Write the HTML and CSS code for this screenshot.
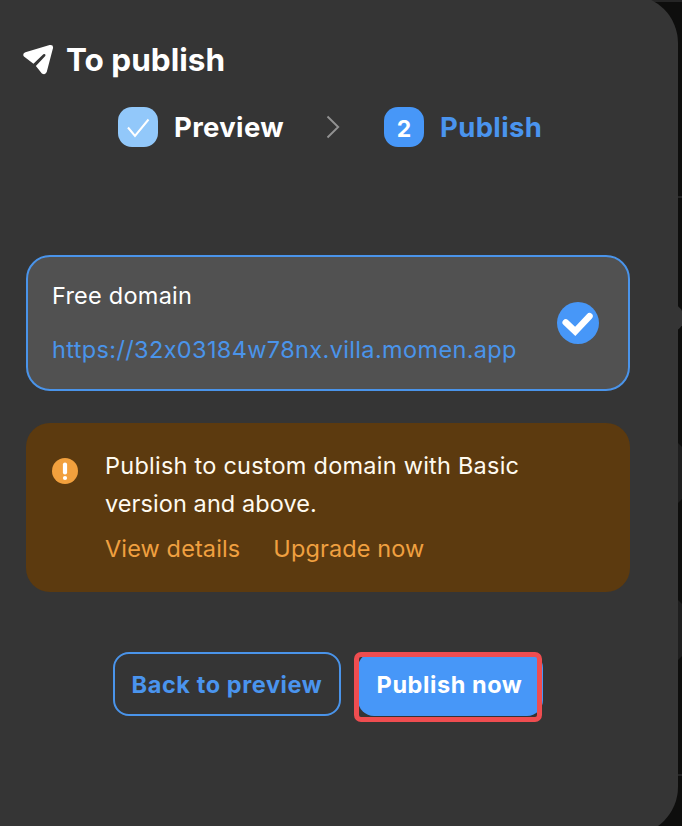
FILE: index.html
```html
<!DOCTYPE html>
<html lang="en">
<head>
<meta charset="utf-8">
<title>To publish</title>
<link rel="stylesheet" href="styles.css">
</head>
<body>
<div class="backdrop"><i class="line line-top"></i><i class="line line-mid"></i><i class="knob"></i><i class="block block-mid"></i><i class="block"></i><i class="line line-low"></i></div>
<main class="panel">
  <header class="header">
    <svg class="plane" viewBox="0 0 32 32"><path d="M3 8.500 28 1Q32 .400 31.500 4L25 29Q23.500 32.500 20 30.500L13.800 22.700 23.500 12.500Q24.300 9.800 21.500 10.500L11.300 20.300 1.500 13Q-.5 10 3 8.500Z" fill="#fff"/></svg>
    <h1 class="title">To publish</h1>
  </header>
  <nav class="steps">
    <span class="badge done"><svg viewBox="0 0 40 40"><path d="m10 20.500 7 8.500 13.500-16.500" fill="none" stroke="#fff" stroke-width="2"/></svg></span>
    <span class="step-name">Preview</span>
    <svg class="chevron" viewBox="0 0 14 24"><path d="m1.500 1.500 10.700 10.500-10.700 10.500" fill="none" stroke="#929292" stroke-width="1.900"/></svg>
    <span class="badge">2</span>
    <span class="step-name current">Publish</span>
  </nav>
  <section class="domain">
    <div class="domain-text">
      <div class="domain-label">Free domain</div>
      <a class="domain-link">https://32x03184w78nx.villa.momen.app</a>
    </div>
    <svg class="selected" viewBox="0 0 42 42"><circle cx="21" cy="21" r="21" fill="#4797f8"/><path d="m8.700 20.400 9.500 9 14.300-15.200" fill="none" stroke="#fff" stroke-width="6.500" stroke-linecap="round"/></svg>
  </section>
  <section class="notice">
    <svg class="alert" viewBox="0 0 26 26"><circle cx="13" cy="13" r="13" fill="#f2a03d"/><path d="M13 6.500v8" stroke="#fff" stroke-width="4.200" stroke-linecap="round"/><circle cx="13" cy="20" r="2.100" fill="#fff"/></svg>
    <div>
      <p class="message">Publish to custom domain with Basic<br><span class="message-end">version and above.</span></p>
      <div class="links"><a>View details</a><a>Upgrade now</a></div>
    </div>
  </section>
  <footer class="actions">
    <button class="button outline">Back to preview</button>
    <button class="button primary">Publish now<i class="highlight"></i></button>
  </footer>
</main>
</body>
</html>
```
FILE: styles.css
```css
* { box-sizing: border-box; }
body { margin: 0; width: 682px; height: 826px; overflow: hidden; position: relative; background: #0e0e0d; font-family: Inter, sans-serif; color: #fff; }
svg { display: block; flex: none; }
.backdrop { position: absolute; inset: 0; }
.line { position: absolute; right: 0; width: 40px; height: 2px; background: #252525; }
.line-top { top: 0; }
.line-mid { top: 196px; }
.line-low { top: 774px; }
.knob { position: absolute; left: 656px; top: 304px; width: 28px; height: 28px; border-radius: 50%; background: #353535; }
.block { position: absolute; right: 0; top: 600px; width: 4px; height: 60px; background: #1e1e1e; clip-path: polygon(0 0, 100% 4px, 100% 56px, 0 100%); }
.block-mid { top: 443px; }
.panel { position: relative; width: 678px; height: 840px; margin-top: -5px; padding: 45px 48px 0 26px; background: #353535; border-radius: 0 48px 48px 0; }
.header { display: flex; align-items: center; height: 40px; margin-left: -4px; }
.plane { width: 32px; height: 31px; margin-top: -2px; }
.title { margin: 0 0 0 12px; font-size: 31.500px; line-height: 40px; font-weight: 700; letter-spacing: 0; }
.steps { display: flex; align-items: center; height: 40px; margin: 27px 0 0 92px; }
.badge { display: grid; place-items: center; flex: none; width: 40px; height: 40px; border-radius: 14px; background: #4797f8; font-size: 23px; font-weight: 700; padding-top: 3px; }
.badge.done { background: #92c8fa; padding: 0; }
.badge svg { width: 40px; height: 40px; }
.step-name { margin-left: 16px; font-size: 27.500px; font-weight: 700; letter-spacing: .35px; white-space: nowrap; width: 110px; }
.current { color: #4a94ee; }
.chevron { width: 14px; height: 24px; margin: 0 44px 0 42px; }
.domain { display: flex; align-items: center; justify-content: space-between; height: 136px; margin-top: 108px; padding: 0 29px 0 24px; border: 2px solid #4a94ea; border-radius: 24px; background: #515151; }
.domain-text { font-size: 23.500px; line-height: 30px; letter-spacing: .24px; white-space: nowrap; }
.domain-link { display: block; margin-top: 24px; color: #4a94ea; letter-spacing: .36px; }
.selected { width: 42px; height: 42px; }
.notice { display: flex; height: 169px; margin-top: 32px; padding: 24px 26px; border-radius: 24px; background: #5c3a0f; font-size: 23.500px; letter-spacing: .24px; white-space: nowrap; }
.alert { width: 26px; height: 26px; margin: 11px 27px 0 0; }
.message { margin: 0; line-height: 38px; color: #fffaf0; }
.message-end { letter-spacing: .08px; }
.links { display: flex; gap: 33px; margin-top: 11px; line-height: 30px; letter-spacing: .12px; color: #f0a040; }
.actions { display: flex; gap: 17px; margin: 60px 0 0 87px; }
.button { position: relative; flex: none; height: 64px; padding: 0; border: 0; border-radius: 16px; font: 700 23.500px Inter, sans-serif; letter-spacing: .58px; white-space: nowrap; color: #fff; }
.outline { width: 228px; border: 2px solid #4a94ea; background: none; color: #4a94ee; }
.primary { width: 185px; padding-right: 2px; background: #4797f8; }
.highlight { position: absolute; left: -4px; top: 0; width: 188px; height: 70px; border: 5px solid #ef4d50; border-radius: 7px; }
```
